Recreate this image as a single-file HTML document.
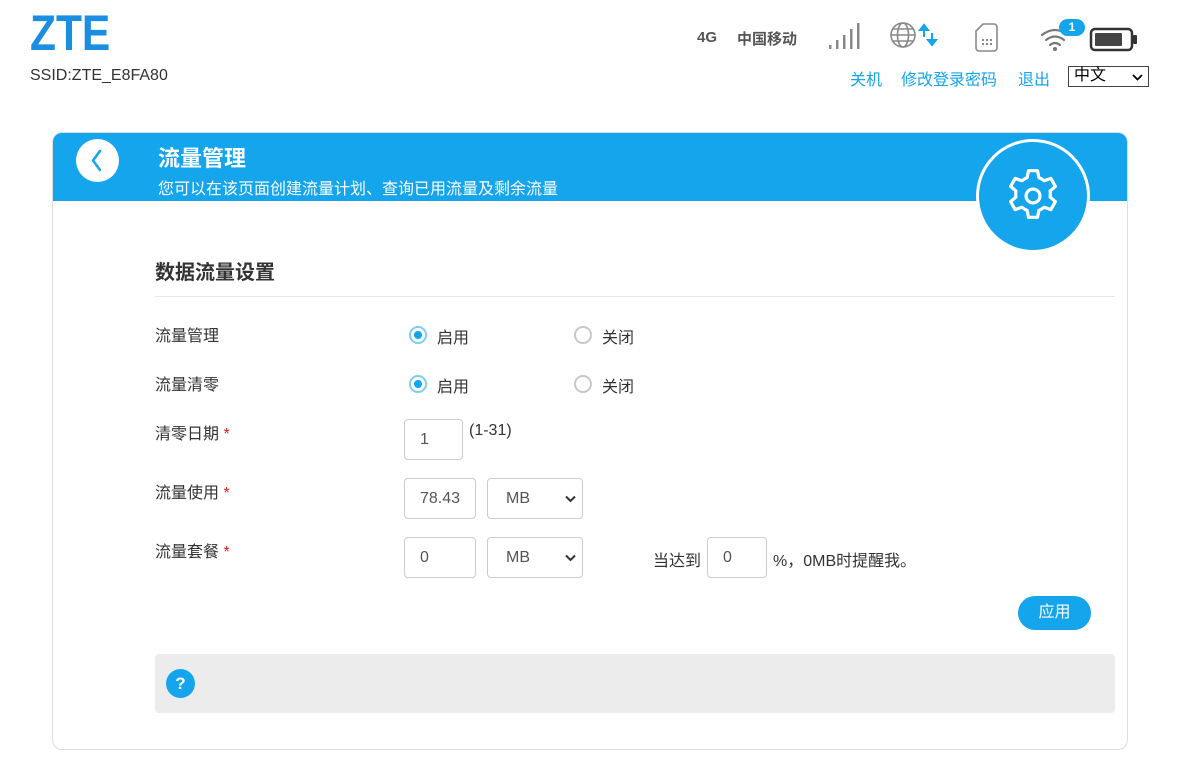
<!DOCTYPE html>
<html><head><meta charset="utf-8"><style>
*{margin:0;padding:0;box-sizing:border-box}
body{width:1200px;height:782px;background:#fff;position:relative;font-family:"Liberation Sans","Noto Sans CJK SC",sans-serif;color:#333;overflow:hidden}
.a{position:absolute;white-space:nowrap}
.lbl{font-size:16px;color:#333}
.star{color:#e02020}
.box{position:absolute;border:1px solid #ccc;border-radius:4px;background:#fff;font-size:16px;color:#555;padding-left:15px;display:flex;align-items:center}
.sel{padding-left:18px}
.sel svg{position:absolute;right:6px;top:50%;margin-top:-4px}
.rad{position:absolute;width:18px;height:18px;border-radius:50%}
.on{border:2px solid #7dcdf5;background:#fff}
.on::after{content:"";position:absolute;left:3px;top:3px;width:8px;height:8px;border-radius:50%;background:#14a5ec}
.off{border:2px solid #c8c8c8}
.blue{color:#14a5ec}
</style></head><body>
<div class="a" style="left:30px;top:5px;font-size:50px;line-height:56px;font-weight:bold;color:#1a8ee0;transform:scaleX(0.85);transform-origin:left top;font-family:'Liberation Sans',sans-serif">ZTE</div>
<div class="a" style="left:30px;top:67px;font-size:16px;color:#333">SSID:ZTE_E8FA80</div>

<div class="a" style="left:697px;top:29px;font-size:15px;font-weight:bold;color:#555">4G</div>
<div class="a" style="left:737px;top:28px;font-size:15px;font-weight:bold;color:#555">中国移动</div>
<svg class="a" style="left:828px;top:22px" width="32" height="28"><g fill="#888"><rect x="1" y="23" width="2.5" height="4"/><rect x="8" y="18" width="2.5" height="9"/><rect x="15" y="13" width="2.5" height="14"/><rect x="22" y="7" width="2.5" height="20"/><rect x="29" y="1" width="2.5" height="26"/></g></svg>
<svg class="a" style="left:888px;top:20px" width="52" height="32"><g fill="none" stroke="#888" stroke-width="1.6"><circle cx="15" cy="15" r="12"/><ellipse cx="15" cy="15" rx="5.5" ry="12"/><line x1="3" y1="15" x2="27" y2="15"/><line x1="5" y1="9" x2="25" y2="9"/><line x1="5" y1="21" x2="25" y2="21"/></g><g stroke="#14a5ec" stroke-width="2" fill="#14a5ec"><line x1="36" y1="7" x2="36" y2="17"/><path d="M32 10 L36 5 L40 10Z"/><line x1="44" y1="13" x2="44" y2="23"/><path d="M40 20 L44 25 L48 20Z"/></g></svg>
<svg class="a" style="left:974px;top:22px" width="26" height="32"><path d="M9 2 H20 a3 3 0 0 1 3 3 V26 a3 3 0 0 1 -3 3 H5 a3 3 0 0 1 -3 -3 V9Z" fill="none" stroke="#888" stroke-width="1.6"/><g fill="#888"><rect x="8" y="17" width="2" height="2"/><rect x="12" y="17" width="2" height="2"/><rect x="16" y="17" width="2" height="2"/><rect x="8" y="21" width="2" height="2"/><rect x="12" y="21" width="2" height="2"/><rect x="16" y="21" width="2" height="2"/></g></svg>
<svg class="a" style="left:1040px;top:26px" width="30" height="26"><g fill="none" stroke="#777" stroke-width="2.2" stroke-linecap="round"><path d="M2 9 Q15 -1 28 9"/><path d="M6 14 Q15 7 24 14"/><path d="M10 19 Q15 15 20 19"/></g><circle cx="15" cy="23" r="2" fill="#777"/></svg>
<div class="a" style="left:1059px;top:19px;width:26px;height:17px;border-radius:9px;background:#14a5ec;color:#fff;font-size:12px;font-weight:bold;text-align:center;line-height:17px">1</div>
<svg class="a" style="left:1089px;top:27px" width="50" height="26"><rect x="2" y="2" width="41" height="21" rx="4" fill="none" stroke="#333" stroke-width="2.5"/><rect x="6" y="6" width="27" height="13" rx="1" fill="#444"/><rect x="44" y="8" width="4" height="9" rx="1" fill="#333"/></svg>

<div class="a blue" style="left:850px;top:66px;font-size:16px">关机</div>
<div class="a blue" style="left:901px;top:66px;font-size:16px">修改登录密码</div>
<div class="a blue" style="left:1018px;top:66px;font-size:16px">退出</div>
<div class="a" style="left:1068px;top:66px;width:81px;height:21px;border:1px solid #444;font-size:16px;line-height:18px;padding-left:5px;color:#000">中文<svg style="position:absolute;right:5px;top:7px" width="11" height="7"><path d="M1 1 L5.5 5.5 L10 1" fill="none" stroke="#000" stroke-width="1.8"/></svg></div>

<div class="a" style="left:52px;top:132px;width:1076px;height:618px;border:1px solid #ddd;border-radius:10px;overflow:hidden">
<div style="position:absolute;left:0;top:0;width:100%;height:68px;background:#14a5ec"></div>
</div>
<div class="a" style="left:76px;top:139px;width:43px;height:43px;border-radius:50%;background:#fff"><svg width="43" height="43"><path d="M24 12 L17 21.5 L24 31" fill="none" stroke="#14a5ec" stroke-width="2.5" stroke-linecap="round" stroke-linejoin="round"/></svg></div>
<div class="a" style="left:158px;top:141px;font-size:22px;font-weight:bold;color:#fff">流量管理</div>
<div class="a" style="left:158px;top:175px;font-size:16px;color:#fff">您可以在该页面创建流量计划、查询已用流量及剩余流量</div>
<div class="a" style="left:976px;top:139px;width:114px;height:114px;border-radius:50%;background:#14a5ec;border:3px solid #fff">
<svg style="position:absolute;left:22px;top:22px" width="64" height="64" viewBox="0 0 24 24"><path d="M10.3 2.5h3.4l.5 2.6a7.5 7.5 0 0 1 2 1.2l2.5-.9 1.7 3-2 1.7a7.5 7.5 0 0 1 0 2.3l2 1.7-1.7 3-2.5-.9a7.5 7.5 0 0 1-2 1.2l-.5 2.6h-3.4l-.5-2.6a7.5 7.5 0 0 1-2-1.2l-2.5.9-1.7-3 2-1.7a7.5 7.5 0 0 1 0-2.3l-2-1.7 1.7-3 2.5.9a7.5 7.5 0 0 1 2-1.2z" fill="none" stroke="#fff" stroke-width="1.2" stroke-linejoin="round"/><circle cx="12" cy="12" r="2.6" fill="none" stroke="#fff" stroke-width="1.2"/></svg></div>

<div class="a" style="left:155px;top:256px;font-size:20px;font-weight:bold;color:#333">数据流量设置</div>
<div class="a" style="left:155px;top:296px;width:960px;height:1px;background:#e6e6e6"></div>

<div class="a lbl" style="left:155px;top:322px">流量管理</div>
<div class="a lbl" style="left:155px;top:371px">流量清零</div>
<div class="a lbl" style="left:155px;top:420px">清零日期 <span class="star">*</span></div>
<div class="a lbl" style="left:155px;top:479px">流量使用 <span class="star">*</span></div>
<div class="a lbl" style="left:155px;top:538px">流量套餐 <span class="star">*</span></div>

<div class="rad on" style="left:409px;top:326px"></div><div class="a lbl" style="left:437px;top:324px">启用</div>
<div class="rad off" style="left:574px;top:326px"></div><div class="a lbl" style="left:602px;top:324px">关闭</div>
<div class="rad on" style="left:409px;top:375px"></div><div class="a lbl" style="left:437px;top:373px">启用</div>
<div class="rad off" style="left:574px;top:375px"></div><div class="a lbl" style="left:602px;top:373px">关闭</div>

<div class="box" style="left:404px;top:419px;width:59px;height:41px">1</div>
<div class="a" style="left:469px;top:422px;font-size:16px;color:#333">(1-31)</div>
<div class="box" style="left:404px;top:478px;width:72px;height:41px">78.43</div>
<div class="box sel" style="left:487px;top:478px;width:96px;height:41px">MB<svg width="11" height="8"><path d="M1 1.5 L5.5 6 L10 1.5" fill="none" stroke="#333" stroke-width="2"/></svg></div>
<div class="box" style="left:404px;top:537px;width:72px;height:41px">0</div>
<div class="box sel" style="left:487px;top:537px;width:96px;height:41px">MB<svg width="11" height="8"><path d="M1 1.5 L5.5 6 L10 1.5" fill="none" stroke="#333" stroke-width="2"/></svg></div>
<div class="a lbl" style="left:653px;top:547px">当达到</div>
<div class="box" style="left:707px;top:537px;width:60px;height:41px">0</div>
<div class="a lbl" style="left:773px;top:547px">%，0MB时提醒我。</div>

<div class="a" style="left:1018px;top:596px;width:73px;height:34px;border-radius:17px;background:#14a5ec;color:#fff;font-size:16px;text-align:center;line-height:34px">应用</div>
<div class="a" style="left:155px;top:654px;width:960px;height:59px;background:#ececec;border-radius:4px"></div>
<div class="a" style="left:166px;top:669px;width:29px;height:29px;border-radius:50%;background:#14a5ec;color:#fff;font-size:17px;font-weight:bold;text-align:center;line-height:29px">?</div>
</body></html>
